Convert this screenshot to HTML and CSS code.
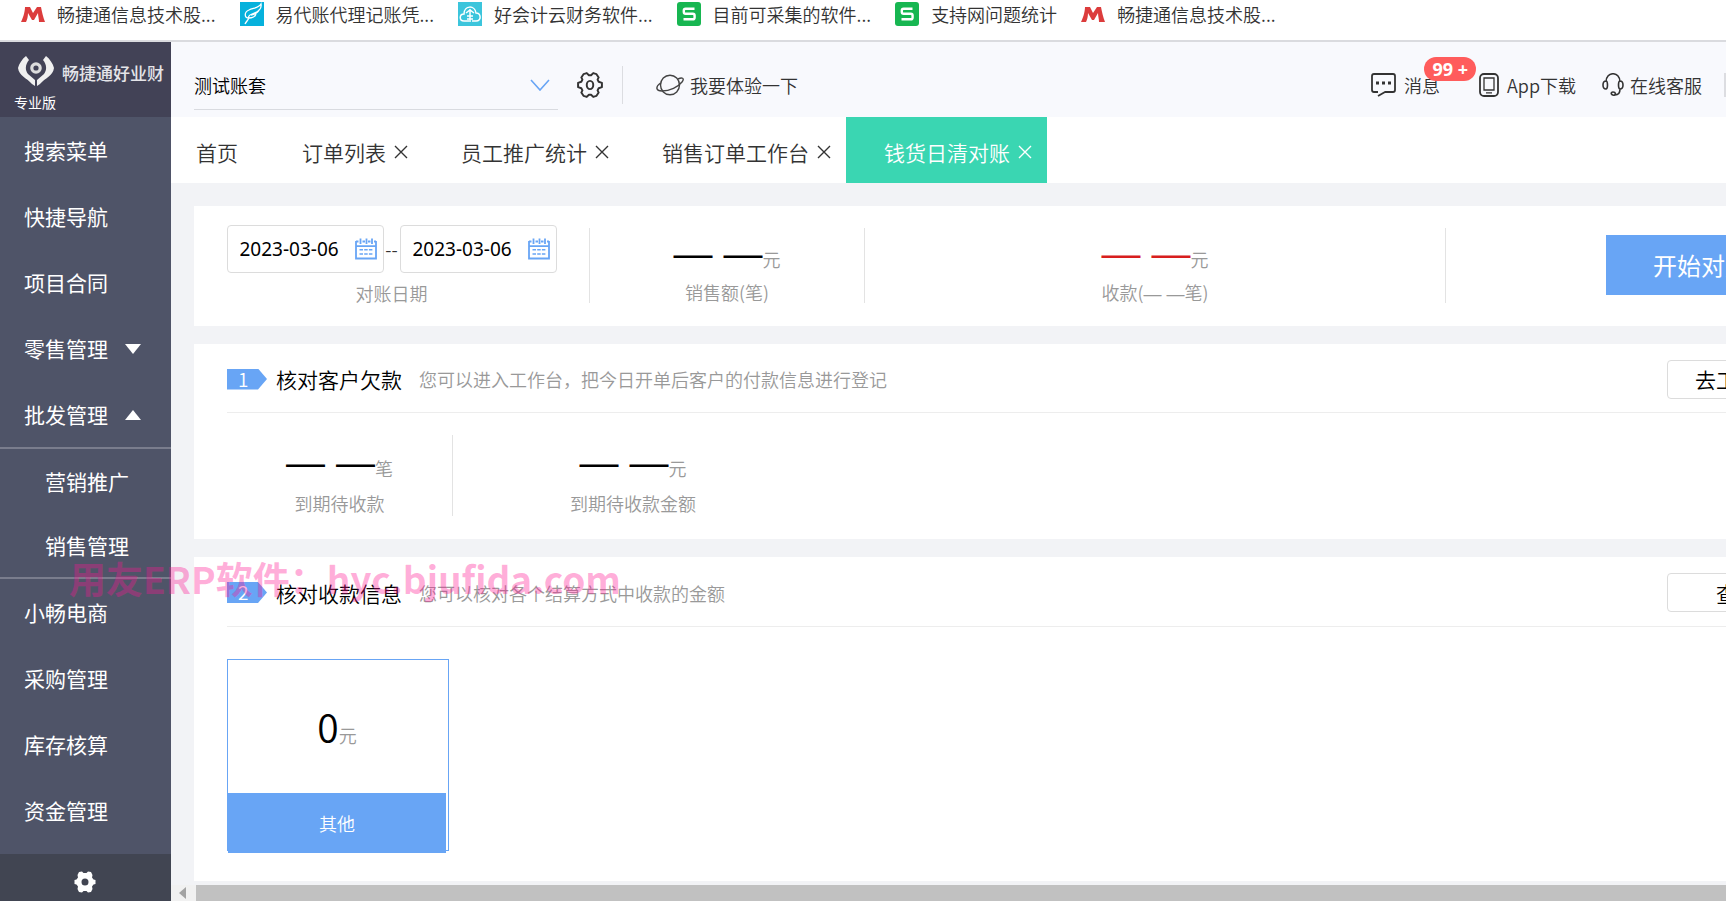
FILE: index.html
```html
<!DOCTYPE html>
<html lang="zh-CN">
<head>
<meta charset="utf-8">
<title>钱货日清对账</title>
<link rel="stylesheet" href="styles.css">
</head>
<body>
<svg class="defs" width="0" height="0" aria-hidden="true">
  <symbol id="m" viewBox="0 0 24 24"><path fill="#dc3c3c" d="M0 20C3 14 4 8 4 5L9 5L12 11L16 5L20 5C21 10 22 15 24 20L18 20C18 17 17 14 17 11L13 18L11 18L7 11C7 15 6 18 5 20Z"/></symbol>
  <symbol id="s" viewBox="0 0 24 24"><rect width="24" height="24" rx="3" fill="#17b651"/><path fill="none" stroke="#fff" stroke-width="2.4" d="M17.5 6.7H8.6Q6.8 6.7 6.8 8.5V10Q6.8 11.8 8.6 11.8H15.8Q17.6 11.8 17.6 13.6V15.4Q17.6 17.3 15.8 17.3H6.5"/></symbol>
  <symbol id="cal" viewBox="0 0 22 22"><path fill="none" stroke="#68a5f5" stroke-width="1.8" d="M1 3.5H3.5M7.5 3.5H10M13 3.5H15.5M19 3.5H21M1 3V20.5H21V3M1 8.200H21M5.500 0.500V6M11.500 0.500V6M17 0.500V6"/><path stroke="#68a5f5" stroke-width="1.6" stroke-dasharray="3.500 1.200" d="M4.500 11.800H18M4.500 16H18"/></symbol>
  <symbol id="x" viewBox="0 0 14 14"><path fill="none" stroke="currentColor" stroke-width="1.400" d="M1 1L13 13M13 1L1 13"/></symbol>
</svg>
<nav class="bookmarks" aria-label="书签">
  <a href="#"><svg class="fav"><use href="#m"/></svg>畅捷通信息技术股...</a>
  <a href="#"><svg class="fav" viewBox="0 0 24 24"><path fill="#06b1dc" d="M0 0H24V24H0Z"/><path fill="none" stroke="#fff" stroke-width="1.300" d="M5 22C6 20 8 18 9 16C4 16 4 10 9 8C13 6 19 6 21 2C22 7 18 10 12 12C9 13 8 15 9 16C12 16 15 15 16 12M11 13C15 12 18 11 19 8"/></svg>易代账代理记账凭...</a>
  <a href="#"><svg class="fav" viewBox="0 0 24 24"><path fill="#3cc5dc" d="M0 0H24V24H0Z"/><path fill="none" stroke="#fff" stroke-width="1.500" d="M11 19H6C1 19 1 12 6 12C6 3 17 3 18 11C23 11 24 19 18 19H14M12 7V20M8 11L12 8L16 11M9 14H15M9 17H15"/></svg>好会计云财务软件...</a>
  <a href="#"><svg class="fav"><use href="#s"/></svg>目前可采集的软件...</a>
  <a href="#"><svg class="fav"><use href="#s"/></svg>支持网问题统计</a>
  <a href="#"><svg class="fav"><use href="#m"/></svg>畅捷通信息技术股...</a>
</nav>
<div class="app">
  <aside class="sidebar">
    <div class="brand">
      <div class="brand-row">
        <svg class="logo" viewBox="0 0 36 30"><path fill="#f0f0f0" d="M8 0L11 4C7 9 7 14 10 18L17 24V30L14 28C9 22 1 20 0 12C1 8 4 3 8 0ZM28 0L25 4C29 9 29 14 26 18L19 24V30L22 28C27 22 35 20 36 12C35 8 32 3 28 0Z"/><circle cx="18" cy="12" r="4.200" fill="none" stroke="#ddd" stroke-width="3.200"/></svg>
        <span class="brand-name">畅捷通好业财</span>
      </div>
      <div class="edition">专业版</div>
    </div>
    <nav class="menu" aria-label="主菜单">
      <a href="#">搜索菜单</a>
      <a href="#">快捷导航</a>
      <a href="#">项目合同</a>
      <a href="#">零售管理<i class="down"></i></a>
      <a href="#">批发管理<i class="up"></i></a>
      <div class="submenu"><a href="#">营销推广</a><a href="#">销售管理</a></div>
      <a href="#">小畅电商</a>
      <a href="#">采购管理</a>
      <a href="#">库存核算</a>
      <a href="#">资金管理</a>
    </nav>
    <button class="settings" aria-label="设置"><svg viewBox="0 0 22 22"><path fill="#fff" fill-rule="evenodd" d="M5 1L8 0.500L9.500 2H12.500L14 0.500L17 1L18.500 4L18 6.500L19.500 8.500L21.500 9V13L19.500 13.500L18 15.500L18.500 18L17 21L14 21.500L12.500 20H9.500L8 21.500L5 21L3.500 18L4 15.500L2.500 13.500L0.500 13V9L2.500 8.500L4 6.500L3.500 4ZM11 7.500A3.500 3.500 0 1 0 11 14.500A3.500 3.500 0 1 0 11 7.500Z"/></svg></button>
  </aside>
  <main class="main">
    <header class="topbar">
      <button class="account">测试账套<svg viewBox="0 0 20 12"><path fill="none" stroke="#68a5f5" stroke-width="1.600" d="M1 1L10 11L19 1"/></svg></button>
      <button class="gear" aria-label="账套设置"><svg viewBox="0 0 24 24"><path fill="none" stroke="#333" stroke-width="1.800" stroke-linejoin="round" d="M6 2L9 1L11 3H13L15 1L18 2L20 5L19 7L20 9L23 10V14L20 15L19 17L20 19L18 22L15 23L13 21H11L9 23L6 22L4 19L5 17L4 15L1 14V10L4 9L5 7L4 5Z"/><ellipse cx="12" cy="12" rx="3" ry="3.800" fill="none" stroke="#333" stroke-width="1.800"/></svg></button>
      <a class="try" href="#"><svg viewBox="0 0 28 22"><ellipse cx="14" cy="11" rx="9.500" ry="9.800" fill="none" stroke="#444" stroke-width="1.400"/><path fill="none" stroke="#444" stroke-width="1.400" d="M4.500 9C-1 13 0 17 6 17C14 17 22 13 26 8C29 4 26 3 22 5"/></svg>我要体验一下</a>
      <div class="tools">
        <a class="msg" href="#"><svg width="25" height="24" viewBox="0 0 25 24"><path fill="none" stroke="#333" stroke-width="1.800" stroke-linejoin="round" d="M7 19H3Q1 19 1 17V3Q1 1 3 1H22Q24 1 24 3V17Q24 19 22 19H14L7 23"/><path fill="#333" d="M5 8.500H8V11.500H5ZM11 8.500H14V11.500H11ZM17 8.500H20V11.500H17Z"/></svg>消息<span class="count">99 +</span></a>
        <a class="phone" href="#"><svg width="20" height="24" viewBox="0 0 20 24"><rect x="1" y="1" width="18" height="22" rx="4" fill="none" stroke="#333" stroke-width="1.800"/><path fill="none" stroke="#333" stroke-width="1.300" d="M5 5H15V17H5ZM7 19.800H13"/></svg>App下载</a>
        <a class="service" href="#"><svg width="22" height="24" viewBox="0 0 22 24"><path fill="none" stroke="#333" stroke-width="1.600" d="M4 9C4 -2 18 -2 18 9M4 8C0 8 0 16 4 16C6 16 6 8 4 8ZM18 8C22 8 22 16 18 16C16 16 16 8 18 8ZM18 16C18 20 16 22 13 22C9 23 8 19 11 19C14 19 14 22 12 22"/></svg>在线客服</a>
      </div>
    </header>
    <nav class="tabs" aria-label="页签">
      <a class="home" href="#">首页</a>
      <a href="#">订单列表<svg><use href="#x"/></svg></a>
      <a href="#">员工推广统计<svg><use href="#x"/></svg></a>
      <a href="#">销售订单工作台<svg><use href="#x"/></svg></a>
      <a class="active" href="#">钱货日清对账<svg><use href="#x"/></svg></a>
    </nav>
    <div class="viewport">
      <div class="content">
        <section class="card summary">
          <div class="dates">
            <div class="range">
              <label class="date"><input type="text" value="2023-03-06" aria-label="开始日期"><svg><use href="#cal"/></svg></label>
              <span>--</span>
              <label class="date"><input type="text" value="2023-03-06" aria-label="结束日期"><svg><use href="#cal"/></svg></label>
            </div>
            <div class="caption">对账日期</div>
          </div>
          <div class="stat sales"><div class="value"><span class="dash">— —</span><small>元</small></div><div class="caption">销售额(笔)</div></div>
          <div class="stat income"><div class="value red"><span class="dash">— —</span><small>元</small></div><div class="caption">收款(<span class="dash">— —</span>笔)</div></div>
          <button class="primary">开始对账</button>
        </section>
        <section class="card debts">
          <div class="head"><span class="step">1</span><h2>核对客户欠款</h2><p>您可以进入工作台，把今日开单后客户的付款信息进行登记</p><button class="plain">去工作台</button></div>
          <div class="stats">
            <div class="stat due"><div class="value"><span class="dash">— —</span><small>笔</small></div><div class="caption">到期待收款</div></div>
            <div class="stat amount"><div class="value"><span class="dash">— —</span><small>元</small></div><div class="caption">到期待收款金额</div></div>
          </div>
        </section>
        <section class="card receipts">
          <div class="head"><span class="step">2</span><h2>核对收款信息</h2><p>您可以核对各个结算方式中收款的金额</p><button class="plain">查看</button></div>
          <div class="tile"><div class="value">0<small>元</small></div><div class="tile-name">其他</div></div>
        </section>
      </div>
      <div class="hscroll" aria-hidden="true"><i></i><b></b></div>
    </div>
  </main>
</div>
<div class="watermark">用友ERP软件：hyc.bjufida.com</div>
</body>
</html>
```

FILE: styles.css
```css
* { box-sizing: border-box; }
body {
  margin: 0;
  height: 100vh;
  display: flex;
  flex-direction: column;
  overflow: hidden;
  font: 18px/24px "Noto Sans CJK SC", sans-serif;
  font-weight: 350;
  color: #333;
  background: #fff;
}
a { color: inherit; text-decoration: none; }
button { font: inherit; color: inherit; background: none; border: 0; padding: 0; cursor: pointer; white-space: nowrap; }
svg { display: block; flex: none; }
.defs { position: absolute; }

.bookmarks { display: flex; gap: 24px; height: 42px; flex: none; padding: 0 21px; border-bottom: 2px solid #dadbdf; white-space: nowrap; }
.bookmarks a { display: flex; gap: 12px; height: 28px; align-items: center; }
.fav { width: 24px; height: 24px; }

.app { display: flex; flex: 1; min-height: 0; }
.sidebar { display: flex; flex-direction: column; width: 171px; flex: none; background: #4f5468; color: #fff; }
.brand { height: 75px; flex: none; padding: 14px 0 0 14px; background: #424256; }
.brand-row { display: flex; gap: 8px; align-items: center; height: 30px; padding-left: 4px; }
.logo { width: 36px; height: 30px; }
.brand-name { padding-top: 4px; font-size: 17px; font-weight: 500; white-space: nowrap; color: #e4e4e8; }
.edition { font-size: 14px; line-height: 32px; font-weight: 400; }
.menu { flex: 1; min-height: 0; overflow: hidden; font-size: 21px; font-weight: 400; }
.menu a { display: flex; align-items: center; height: 66px; padding-left: 24px; }
.submenu { border: solid #7a7d8d; border-width: 2px 0; }
.submenu a { height: 64px; padding-left: 45px; }
.menu i { margin: 2px 0 0 17px; border: solid transparent; border-width: 0 8px; }
.menu .down { border-top: 10px solid #fff; }
.menu .up { border-bottom: 10px solid #fff; }
.settings { display: flex; justify-content: center; height: 47px; flex: none; padding: 17px 2px 0 0; background: #414552; }
.settings svg { width: 22px; height: 22px; }

.main { display: flex; flex-direction: column; flex: 1; min-width: 0; background: #f2f3f6; }
.topbar { display: flex; align-items: center; height: 75px; flex: none; padding: 10px 0 0 23px; background: #f8f9fd; white-space: nowrap; }
.account { display: flex; align-items: center; justify-content: space-between; width: 364px; height: 50px; padding: 2px 8px 0 0; border-bottom: 1px solid #d9dbe0; color: #000; }
.account svg { width: 20px; height: 12px; }
.gear { display: flex; align-items: center; height: 38px; padding: 0 19px; border-right: 1px solid #dcdde1; }
.gear svg { width: 26px; height: 26px; }
.try { display: flex; align-items: center; gap: 6px; margin-left: 33px; }
.try svg { width: 28px; height: 22px; }
.tools { display: flex; align-items: center; gap: 24px; margin-left: auto; }
.tools a { position: relative; display: flex; align-items: center; gap: 8px; }
.tools .msg { margin-right: 15px; }
.tools .phone { margin-right: 2px; }
.tools .service { gap: 6px; padding-right: 22px; border-right: 2px solid #dcdde1; }
.count { position: absolute; right: -36px; bottom: 16px; padding: 0 8px; height: 24px; border-radius: 12px; background: #ff5c5c; color: #fff; font: 700 18px/24px "Open Sans", sans-serif; }

.tabs { display: flex; height: 66px; flex: none; background: #fff; font-size: 21px; white-space: nowrap; }
.tabs a { display: flex; align-items: center; gap: 8px; padding: 4px 15px 0 38px; }
.tabs .home { padding: 4px 26px 0 25px; }
.tabs .active { background: #3ad6b2; color: #fff; }
.tabs svg { width: 14px; height: 14px; }

.viewport { display: flex; flex-direction: column; flex: 1; min-height: 0; padding: 23px 0 0 23px; overflow: hidden; }
.content { display: flex; flex-direction: column; gap: 18px; width: 1644px; flex: 1; min-height: 0; }
.card { background: #fff; }
.caption { color: #999; line-height: 24px; }
.stat { text-align: center; white-space: nowrap; }
.value { color: #000; font-size: 39px; line-height: 44px; }
.value small { font-size: 18px; line-height: 18px; color: #999; }
.stat .caption { margin-top: 8px; }
.dash { font-family: "Liberation Sans", sans-serif; line-height: 18px; }
.red { color: #d81e1e; }

.summary { display: flex; padding: 22px 0; height: 120px; flex: none; }
.summary > div { height: 75px; border-right: 1px solid #e3e3e3; }
.dates { width: 396px; display: flex; flex-direction: column; align-items: center; }
.range { display: flex; align-items: center; margin-top: -3px; }
.range span { width: 16px; text-align: center; }
.dates .caption { margin-top: 8px; }
.date { display: flex; align-items: center; width: 157px; height: 48px; padding: 0 6px 0 12px; border: 1px solid #dcdcdc; border-radius: 4px; }
.date input { flex: 1; min-width: 0; border: 0; padding: 0; font: 400 19px/24px "Noto Sans", sans-serif; color: #000; outline: 0; }
.date svg { width: 22px; height: 22px; }
.sales { width: 275px; }
.income { width: 581px; }
.primary { width: 190px; height: 60px; margin: 7px 0 0 160px; background: #68a5f5; color: #fff; font-size: 24px; font-weight: 400; }

.head { display: flex; align-items: center; height: 69px; margin-left: 33px; padding: 2px 31px 0 0; border-bottom: 1px solid #ededed; }
.step { width: 40px; height: 21px; padding-left: 11px; line-height: 20px; font-size: 19px; color: #fff; background: #68a5f5; clip-path: polygon(0 0, 31px 0, 100% 50%, 31px 100%, 0 100%); }
h2 { margin: 0 17px 0 9px; font-size: 21px; font-weight: 350; color: #000; }
p { margin: 0; color: #999; }
.plain { width: 140px; height: 39px; margin-left: auto; border: 1px solid #dcdcdc; border-radius: 4px; font-size: 21px; color: #000; }
.debts { height: 195px; flex: none; }
.stats { display: flex; padding: 22px 0 0 33px; }
.due { width: 226px; height: 81px; border-right: 1px solid #e3e3e3; }
.amount { width: 360px; }
.debts .value { line-height: 48px; }
.receipts { height: 324px; flex: none; }
.receipts .head { height: 70px; }
.tile { width: 222px; height: 192px; margin: 32px 0 0 33px; padding: 0 2px 0 0; border: 1px solid #68a5f5; text-align: center; }
.tile .value { line-height: 133px; }
.tile-name { height: 60px; line-height: 60px; background: #68a5f5; color: #fff; }
.hscroll { display: flex; align-items: center; gap: 10px; height: 16px; flex: none; margin-left: -23px; padding-left: 8px; background: #f1f1f1; }
.hscroll i { border: solid transparent; border-width: 6px 7px 6px 0; border-right-color: #a3a3a3; }
.hscroll b { flex: 1; height: 16px; background: #c1c1c1; }

.watermark { position: absolute; left: 69px; top: 556px; font-size: 37px; line-height: 44px; font-weight: 700; color: rgba(255, 20, 147, 0.35); white-space: nowrap; pointer-events: none; }
```
